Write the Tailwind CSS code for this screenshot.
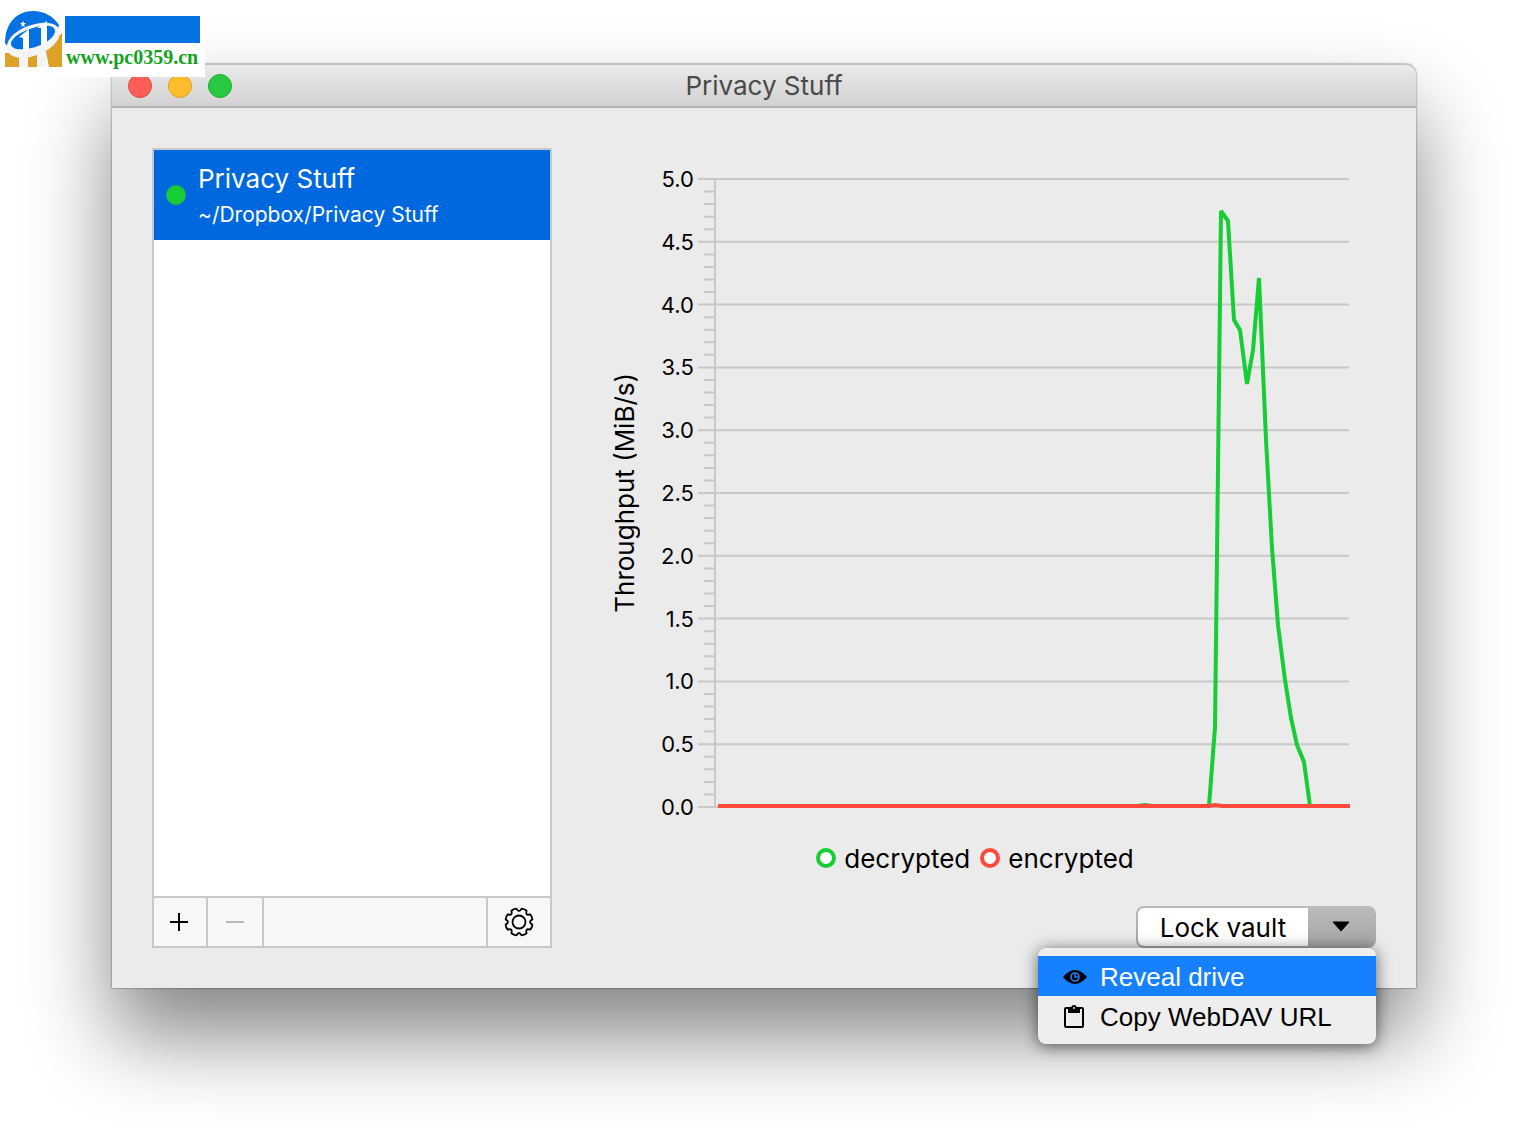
<!DOCTYPE html>
<html lang="en">
<head>
<meta charset="utf-8">
<title>Privacy Stuff</title>
<script src="https://cdn.jsdelivr.net/npm/@tailwindcss/browser@4"></script>
</head>
<body class="relative flex min-h-screen flex-col bg-white px-28 pt-16 pb-40 font-['Inter',sans-serif] text-black">

<!-- Application window -->
<main class="flex flex-1 flex-col rounded-t-[10px] bg-[#ebebeb] shadow-[0_0_2px_rgba(0,0,0,0.7),0_48px_84px_rgba(0,0,0,0.48)]">
  <header class="relative flex h-11 items-center justify-center rounded-t-[10px] border-t border-b-2 border-t-[#c0c0c0] border-b-[#b3b3b3] bg-linear-to-b from-[#eaeaea] to-[#d2d2d2]">
    <div class="absolute left-4 flex gap-4">
      <button aria-label="Close" class="size-6 rounded-full border border-[#e0443e] bg-[#ff5f57]"></button>
      <button aria-label="Minimize" class="size-6 rounded-full border border-[#dea123] bg-[#ffbd2e]"></button>
      <button aria-label="Zoom" class="size-6 rounded-full border border-[#1aab29] bg-[#28c940]"></button>
    </div>
    <h1 class="text-[26px] leading-8 text-[#4a4a4a]">Privacy Stuff</h1>
  </header>

  <div class="flex flex-1 gap-12 p-10">
    <!-- Vault list -->
    <section class="flex w-[400px] shrink-0 flex-col border-2 border-[#c8c8c8] bg-white">
      <ul class="flex-1">
        <li class="flex h-[90px] items-center gap-3 bg-[#0068df] px-3 text-white">
          <span class="size-5 rounded-full border border-[#2fb24d] bg-[#16cd34]"></span>
          <div>
            <p class="text-[26px] leading-10">Privacy Stuff</p>
            <p class="text-[21px] leading-8">~/Dropbox/Privacy Stuff</p>
          </div>
        </li>
      </ul>
      <div class="flex h-[50px] border-t-2 border-[#c8c8c8] bg-[#f7f7f7]">
        <button aria-label="Add vault" class="flex w-[54px] items-center justify-center border-r-2 border-[#c8c8c8]">
          <svg class="size-5" viewBox="0 0 20 20" stroke="#000" stroke-width="2"><path d="M0 10H18M9 1V19"/></svg>
        </button>
        <button aria-label="Remove vault" disabled class="flex w-14 items-center justify-center border-r-2 border-[#c8c8c8]">
          <svg class="size-5" viewBox="0 0 20 20" stroke="#b9b9b9" stroke-width="2"><path d="M1 10H19"/></svg>
        </button>
        <button aria-label="Settings" class="ml-auto flex w-16 items-center justify-center border-l-2 border-[#c8c8c8]">
          <svg id="gear" class="size-8" viewBox="-16 -16 32 32" fill="none" stroke="#000" stroke-width="1.800" stroke-linejoin="round"><circle r="6.500"/><path/></svg>
        </button>
      </div>
    </section>

    <section class="flex min-w-0 flex-1 flex-col">
      <!-- Throughput chart -->
      <figure class="mr-[26px] flex flex-1 flex-col pt-5">
        <div class="flex flex-1">
          <div class="flex w-[50px] items-center justify-center">
            <span class="rotate-180 text-[26px] leading-9 whitespace-nowrap [writing-mode:vertical-rl]">Throughput (MiB/s)</span>
          </div>
          <div class="flex w-12 flex-col justify-between pr-1 text-right text-[22px] leading-[22px]">
            <span>5.0</span><span>4.5</span><span>4.0</span><span>3.5</span><span>3.0</span><span>2.5</span><span>2.0</span><span>1.5</span><span>1.0</span><span>0.5</span><span>0.0</span>
          </div>
          <div class="relative my-[10px] min-w-0 flex-1">
            <svg class="absolute inset-0 size-full overflow-visible" viewBox="0 0 652 630" preserveAspectRatio="none" fill="none">
              <path id="grid" stroke="#c8c8c8" stroke-width="2"/>
              <path d="M20 628H440L447 627L454 628H511L517 549L523 33L530 43L536 142L542 152L549 206L555 172L561 100L568 262L574 370L580 447L587 502L593 540L599 567L606 584L612 628H652" stroke="#16cd34" stroke-width="4" stroke-linejoin="bevel"/>
              <path d="M20 628H511L517 627L524 628H652" stroke="#ff493b" stroke-width="4"/>
            </svg>
          </div>
        </div>
        <figcaption class="mt-6 flex h-8 items-center justify-center gap-[10px] text-[26px]">
          <span class="flex items-center gap-2"><i class="size-5 rounded-full border-4 border-[#16cd34] bg-white"></i>decrypted</span>
          <span class="flex items-center gap-2"><i class="size-5 rounded-full border-4 border-[#ff493b] bg-white"></i>encrypted</span>
        </figcaption>
      </figure>

      <!-- Lock button with its menu -->
      <div class="relative mt-8 flex h-[42px] w-60 self-end rounded-lg bg-linear-to-b from-[#bcbcbc] to-[#a4a4a4] p-[2px] text-[26px]">
        <button class="w-[170px] rounded-l-md bg-white">Lock vault</button>
        <button aria-label="More actions" aria-expanded="true" class="flex flex-1 items-center justify-center">
          <svg class="h-3 w-5" viewBox="0 0 20 12"><path d="M2 1H18L10 10Z" fill="#000" stroke="#000" stroke-linejoin="round"/></svg>
        </button>
        <div role="menu" class="absolute top-full right-0 w-[338px] rounded-lg bg-[#eeeeee] py-2 font-['Liberation_Sans',sans-serif] shadow-[0_2px_16px_rgba(0,0,0,0.6)]">
          <button role="menuitem" class="flex h-10 w-full items-center gap-3 bg-[#1780ff] px-6 pt-[2px] text-white">
            <svg class="h-6 w-[26px]" viewBox="0 0 26 24"><path d="M1 12Q7 5 13 5T25 12Q19 19 13 19T1 12Z" fill="#000"/><circle cx="13" cy="12" r="4" fill="none" stroke="#1780ff" stroke-width="1.600"/><path d="M13 9V12H16" fill="none" stroke="#1780ff" stroke-width="1.500"/></svg>
            Reveal drive
          </button>
          <button role="menuitem" class="flex h-10 w-full items-center gap-3 px-6 pt-[2px]">
            <svg class="h-6 w-[26px]" viewBox="0 0 26 24"><rect x="3" y="3" width="18" height="19" rx="1" fill="none" stroke="#000" stroke-width="2"/><path d="M6 2H9Q10 0 12 0T15 2H18V8H6Z" fill="#000"/><circle cx="12" cy="3" r="1" fill="#eee"/></svg>
            Copy WebDAV URL
          </button>
        </div>
      </div>
    </section>
  </div>
</main>

<!-- Site badge -->
<a href="#" class="absolute top-0 left-0 flex h-[77px] w-[205px] gap-[3px] bg-white pt-[11px] pl-[5px]">
  <svg class="h-14 w-[57px]" viewBox="0 0 57 56">
    <path d="M0 32C0 12 12 0 28 0C39 0 48 5 54 14L46 40H6Z" fill="#0472e0"/>
    <path d="M0 42H14V56H0ZM22 44L32 42V56H22ZM40 36L57 22V56H44Z" fill="#dea128"/>
    <path d="M14 42H23V56H14ZM32 40H41V56H32Z" fill="#f4f4f4"/>
    <path fill-rule="evenodd" d="M2 36C2 25 18 14 36 12C48 11 55 15 55 22C54 34 36 46 18 47C8 47 2 43 2 36ZM6 33C6 37 11 39 20 38C34 37 50 28 50 20C50 15 44 14 36 15C20 18 6 26 6 33Z" fill="#f4f4f4"/>
    <path d="M14 26L24 18V40H18V27ZM32 17L42 10V32L36 35V17Z" fill="#fff"/>
    <path d="M18 10L19 12L21 12L19 14L20 16L18 15L16 16L17 14L15 12L17 12Z" fill="#fff"/>
  </svg>
  <div class="pt-[5px]">
    <div class="h-[27px] w-[135px] bg-[#0472e0]"></div>
    <p class="pl-px font-['Liberation_Serif',serif] text-xl font-bold text-[#12a320]">www.pc0359.cn</p>
  </div>
</a>

<script>
  // Gridlines with major ticks every 0.5, minor ticks every 0.1, and the axis line
  let d = 'M17 0V630';
  for (let i = 0; i <= 50; i++) {
    const y = (1 + i * 12.56).toFixed(1);
    d += i % 5 ? `M6 ${y}H16` : `M0 ${y}H651`;
  }
  document.getElementById('grid').setAttribute('d', d);

  // Eight-tooth gear: rounded teeth with concave valleys at the compass points
  let g = '';
  for (let t = 0; t < 8; t++) {
    const p = (r, a) => {
      const x = (t * 45 + a) * Math.PI / 180;
      return (r * Math.cos(x)).toFixed(2) + ' ' + (r * Math.sin(x)).toFixed(2);
    };
    g += (t ? 'L' : 'M') + p(13.6, -11) + 'Q' + p(8.6, 0) + ' ' + p(13.6, 11) + 'Q' + p(14.2, 22.5) + ' ' + p(13.6, 34);
  }
  document.querySelector('#gear path').setAttribute('d', g + 'Z');
</script>
</body>
</html>
